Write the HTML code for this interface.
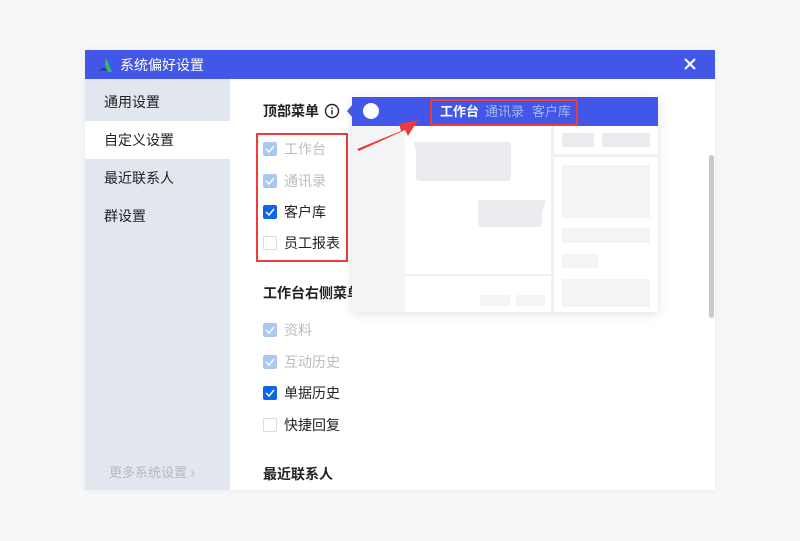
<!DOCTYPE html>
<html><head><meta charset="utf-8"><style>
*{margin:0;padding:0;box-sizing:border-box}
body{width:800px;height:541px;background:#f7f8fa;font-family:"Liberation Sans","Noto Sans CJK SC",sans-serif;position:relative;overflow:hidden}
.a{position:absolute}
.t{position:absolute;font-size:14px;line-height:16px;color:#222;white-space:nowrap}
.cb{position:absolute;width:14px;height:14px;border-radius:2px}
.on{background:#0d66e8}
.dis{background:#a9c8f4}
.off{border:1px solid #d8dbe0;background:#fff}
.cb svg{position:absolute;left:2px;top:3px}
.g{position:absolute;background:#ebecf0}
.r{position:absolute;background:#f3f4f5}
</style></head><body>
<div class="a" style="left:85px;top:50px;width:630px;height:440px;background:#fff;box-shadow:0 0 8px rgba(0,0,0,.06)"></div>
<div class="a" style="left:85px;top:50px;width:630px;height:29px;background:#4256e8"></div>
<svg class="a" style="left:98px;top:56px" width="18" height="18" viewBox="0 0 18 18"><path d="M8 2 L14 16 L10 16 L7 8Z" fill="#22c46b"/><path d="M1 16 Q5 9 9 15 Q5 12 1 16Z" fill="#1b2a5a"/></svg>
<div class="t" style="left:120px;top:57px;color:#fff;font-size:14px">系统偏好设置</div>
<svg class="a" style="left:684px;top:58px" width="12" height="12" viewBox="0 0 12 12"><path d="M1 1L11 11M11 1L1 11" stroke="#fff" stroke-width="2"/></svg>
<div class="a" style="left:85px;top:79px;width:145px;height:411px;background:#e2e6ee"></div>
<div class="a" style="left:85px;top:121px;width:145px;height:38px;background:#fff"></div>
<div class="t" style="left:104px;top:94px">通用设置</div>
<div class="t" style="left:104px;top:132px">自定义设置</div>
<div class="t" style="left:104px;top:170px">最近联系人</div>
<div class="t" style="left:104px;top:208px">群设置</div>
<div class="t" style="left:109px;top:465px;color:#b4b9c2;font-size:13px">更多系统设置 ›</div>
<div class="t" style="left:263px;top:103px;font-weight:bold">顶部菜单</div>
<svg class="a" style="left:324px;top:103px" width="16" height="16" viewBox="0 0 16 16"><circle cx="8" cy="8" r="6.5" fill="none" stroke="#222" stroke-width="1.4"/><rect x="7.3" y="7" width="1.4" height="4.5" fill="#222"/><rect x="7.3" y="4.3" width="1.4" height="1.5" fill="#222"/></svg>
<div class="a" style="left:256px;top:133px;width:92px;height:129px;border:2px solid #ee3b3b"></div>
<div class="cb dis" style="left:263px;top:142px"><svg width="10" height="8"><path d="M1 4L4 7L9 1" stroke="#fff" stroke-width="1.5" fill="none"/></svg></div>
<div class="t" style="left:284px;top:141px;color:#b9bcc2">工作台</div>
<div class="cb dis" style="left:263px;top:174px"><svg width="10" height="8"><path d="M1 4L4 7L9 1" stroke="#fff" stroke-width="1.5" fill="none"/></svg></div>
<div class="t" style="left:284px;top:173px;color:#b9bcc2">通讯录</div>
<div class="cb on" style="left:263px;top:205px"><svg width="10" height="8"><path d="M1 4L4 7L9 1" stroke="#fff" stroke-width="1.5" fill="none"/></svg></div>
<div class="t" style="left:284px;top:204px">客户库</div>
<div class="cb off" style="left:263px;top:236px"></div>
<div class="t" style="left:284px;top:235px">员工报表</div>
<div class="t" style="left:263px;top:285px;font-weight:bold">工作台右侧菜单</div>
<div class="cb dis" style="left:263px;top:323px"><svg width="10" height="8"><path d="M1 4L4 7L9 1" stroke="#fff" stroke-width="1.5" fill="none"/></svg></div>
<div class="t" style="left:284px;top:322px;color:#b9bcc2">资料</div>
<div class="cb dis" style="left:263px;top:355px"><svg width="10" height="8"><path d="M1 4L4 7L9 1" stroke="#fff" stroke-width="1.5" fill="none"/></svg></div>
<div class="t" style="left:284px;top:354px;color:#b9bcc2">互动历史</div>
<div class="cb on" style="left:263px;top:386px"><svg width="10" height="8"><path d="M1 4L4 7L9 1" stroke="#fff" stroke-width="1.5" fill="none"/></svg></div>
<div class="t" style="left:284px;top:385px">单据历史</div>
<div class="cb off" style="left:263px;top:418px"></div>
<div class="t" style="left:284px;top:417px">快捷回复</div>
<div class="t" style="left:263px;top:466px;font-weight:bold">最近联系人</div>
<div class="a" style="left:709px;top:155px;width:5px;height:163px;border-radius:3px;background:#c8cacd"></div>
<!-- popup -->
<div class="a" style="left:352px;top:97px;width:306px;height:215px;background:#fff;box-shadow:0 2px 10px rgba(0,0,0,.12)"></div>
<div class="a" style="left:352px;top:126px;width:53px;height:186px;background:#f3f4f6"></div>
<div class="a" style="left:551px;top:126px;width:3px;height:186px;background:#f0f1f3"></div>
<div class="a" style="left:405px;top:274px;width:146px;height:2px;background:#f0f1f3"></div>
<div class="a" style="left:554px;top:154px;width:104px;height:3px;background:#f0f1f3"></div>
<div class="a" style="left:352px;top:97px;width:306px;height:29px;background:#4256e8"></div>
<svg class="a" style="left:346px;top:104px" width="7" height="14"><path d="M7 0L1 7L7 14Z" fill="#4256e8"/></svg>
<div class="a" style="left:363px;top:103px;width:16px;height:16px;border-radius:50%;background:#fff"></div>
<div class="a" style="left:430px;top:99px;width:148px;height:27px;border:2px solid #ee3b3b"></div>
<div class="t" style="left:440px;top:104px;color:#fff;font-weight:bold;font-size:13px">工作台</div>
<div class="t" style="left:485px;top:104px;color:#a9b4f5;font-size:13px">通讯录</div>
<div class="t" style="left:532px;top:104px;color:#a9b4f5;font-size:13px">客户库</div>
<svg class="a" style="left:355px;top:116px" width="66" height="36"><path d="M2 33L46 15L44 8L63 4L53 20L50 14L4 35Z" fill="#ee3b3b"/></svg>
<svg class="a" style="left:410px;top:142px" width="140" height="90"><path d="M4 0H97a4 4 0 0 1 4 4V36a3 3 0 0 1-3 3H9a3 3 0 0 1-3-3V10Z" fill="#ebecf0"/><path d="M68 58H136L132 70V82a3 3 0 0 1-3 3H71a3 3 0 0 1-3-3Z" fill="#ebecf0"/></svg>
<div class="r" style="left:480px;top:295px;width:30px;height:11px"></div>
<div class="r" style="left:516px;top:295px;width:29px;height:11px"></div>
<div class="g" style="left:562px;top:133px;width:32px;height:14px"></div>
<div class="g" style="left:602px;top:133px;width:48px;height:14px"></div>
<div class="r" style="left:562px;top:165px;width:88px;height:53px"></div>
<div class="r" style="left:562px;top:228px;width:88px;height:15px"></div>
<div class="r" style="left:562px;top:254px;width:36px;height:14px"></div>
<div class="r" style="left:562px;top:279px;width:88px;height:28px"></div>
</body></html>
